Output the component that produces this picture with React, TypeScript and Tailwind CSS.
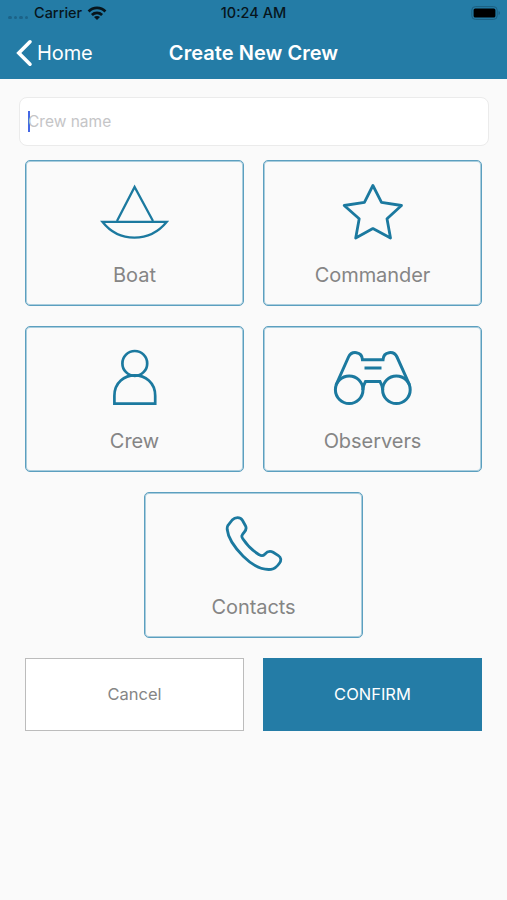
import React, { useState } from 'react'

function BoatIcon() {
  return (
    <svg width="90" height="75" viewBox="0 0 90 75" fill="none" stroke="#1b799f" strokeWidth="2.3">
      <path d="M27 46 L44.6 12 L63 46" />
      <path d="M12.4 46.8 H76.8 C59.6 68 29 68 12.4 46.8 Z" />
    </svg>
  )
}

function StarIcon() {
  return (
    <svg width="90" height="75" viewBox="0 0 90 75" fill="none" stroke="#1b799f" strokeWidth="2.8" strokeLinejoin="round">
      <path d="M44.9 10.5 L53.5 27.3 L73.5 30.5 L59 43.8 L62.5 63 L44.9 53.6 L27.7 63 L31.2 43.8 L16.2 30.5 L36.4 27.3 Z" />
    </svg>
  )
}

function PersonIcon() {
  return (
    <svg width="90" height="75" viewBox="0 0 90 75" fill="none" stroke="#1b799f" strokeWidth="2.7">
      <circle cx="44.8" cy="22.4" r="12.4" />
      <path d="M24.4 62.6 V54.8 C24.4 27.6 65.2 27.6 65.2 54.8 V62.6 Z" />
    </svg>
  )
}

function BinocularsIcon() {
  return (
    <svg width="90" height="75" viewBox="0 0 90 75" fill="none" stroke="#1b799f" strokeWidth="3">
      <circle cx="21.2" cy="48.8" r="13.8" />
      <circle cx="68.4" cy="48.8" r="13.8" />
      <path d="M8 44 L20.5 16 C23.5 9.5 34 10 34.5 18.8 H55 C55.5 10 66 9.5 69 16 L81.6 44" />
      <path d="M36.5 27 H53.5" />
      <path d="M34.8 49 C35 45 36 43 37.5 40.5 H52 C53.5 43 54.5 45 54.8 49" />
    </svg>
  )
}

function PhoneIcon() {
  return (
    <svg width="90" height="75" viewBox="0 0 90 75" fill="none" stroke="#1b799f" strokeWidth="2.8" strokeLinejoin="round">
      <path d="M18.8 18.7 L23.2 13 C26.1 10 31.1 9.8 33.4 13.2 L36.6 19 C37.8 21.6 37 23.3 35.2 25.3 C32.8 28 32 29.2 33.8 31.7 C37.6 37.5 43.6 43.7 50.1 47.7 C52.4 49.2 54.1 49.1 55.8 47.2 C58.6 44 61.2 43.6 64.1 45.3 L69.4 48.6 C72.2 50.4 72.4 53.4 70.6 56 C68.1 59.7 65.6 61.8 62.1 62.4 C53.6 63.3 43.4 58.4 34.2 49.2 C24.6 39.5 19 30.5 18.2 22.5 C18.1 21 18.1 20 18.8 18.7 Z" />
    </svg>
  )
}

function WifiIcon() {
  return (
    <svg className="ml-[5px]" width="20" height="14" viewBox="0 0 20 14" fill="none" stroke="#07151c" strokeWidth="2.8">
      <path d="M1.6 5.4 C6.2 0.7 13.8 0.7 18.4 5.4" />
      <path d="M4.9 8.9 C7.8 6.1 12.2 6.1 15.1 8.9" />
      <path d="M7 11.1 C8.6 9.5 11.4 9.5 13 11.1 L10 14 Z" fill="#07151c" stroke="none" />
    </svg>
  )
}

function Card({ label, children }: { label: string; children: React.ReactNode }) {
  return (
    <button className="flex h-[146px] w-[219px] flex-col items-center rounded-[5px] border border-[#5b9fbf] pt-[14px] shadow-[inset_0_0_0_1px_#a9cddd]">
      {children}
      <span className="mt-[11px] text-[20px] leading-[28px] tracking-[-0.05px] text-[#858585]">{label}</span>
    </button>
  )
}

export default function App() {
  const [name, setName] = useState('')

  return (
    <div className="h-[900px] w-[507px] overflow-hidden bg-[#fafafa] font-['Inter','Liberation_Sans',sans-serif]">
      <header className="h-[79px] bg-[#247ca6]">
        <div className="grid h-[26px] grid-cols-3 items-center text-[14.5px] font-medium text-[#07151c]">
          <div className="flex items-center pl-2">
            <div className="mt-[9px] mr-[6px] flex gap-[2px]">
              {[0, 1, 2, 3].map(i => (
                <span key={i} className="size-[3.5px] rounded-full bg-[#1c6388]" />
              ))}
            </div>
            <span>Carrier</span>
            <WifiIcon />
          </div>
          <span className="text-center">10:24 AM</span>
          <div className="flex justify-end pr-[6px]">
            <svg width="30" height="14" viewBox="0 0 30 14">
              <rect x="0.8" y="0.6" width="25.4" height="12.8" rx="3.6" fill="none" stroke="#1c5f80" strokeWidth="1" />
              <rect x="2.6" y="2.5" width="21.8" height="9" rx="1.6" fill="#000" />
              <path d="M27.6 5 C29.4 5.6 29.4 8.4 27.6 9 Z" fill="#1c5f80" />
            </svg>
          </div>
        </div>
        <div className="grid h-[53px] grid-cols-[150px_1fr_150px] items-center text-white">
          <button className="flex items-center pl-4 text-[20px]">
            <svg width="17" height="28" viewBox="0 0 17 28" fill="none" stroke="currentColor" strokeWidth="3.6" strokeLinecap="round">
              <path d="M14 2.8 L2.8 14 L14 25.2" />
            </svg>
            <span className="ml-[4px] tracking-[-0.1px]">Home</span>
          </button>
          <h1 className="text-center text-[20px] font-semibold tracking-[0.05px] whitespace-nowrap">Create New Crew</h1>
        </div>
      </header>

      <main className="pt-[18px]">
        <div className="ml-[19px] flex h-[49px] w-[470px] items-center rounded-[8px] border border-[#ebebeb] bg-white pl-[8px]">
          <span className="h-[21px] w-[2px] shrink-0 bg-[#4568e5]" />
          <input
            className="-ml-[2px] w-full bg-transparent pt-px text-[15.5px] outline-none placeholder:text-[#c5c5c7]"
            placeholder="Crew name"
            value={name}
            onChange={e => setName(e.target.value)}
          />
        </div>

        <div className="mt-[14px] ml-[25px] flex w-[457px] flex-wrap justify-center gap-x-[19px] gap-y-[20px]">
          <Card label="Boat"><BoatIcon /></Card>
          <Card label="Commander"><StarIcon /></Card>
          <Card label="Crew"><PersonIcon /></Card>
          <Card label="Observers"><BinocularsIcon /></Card>
          <Card label="Contacts"><PhoneIcon /></Card>
        </div>

        <div className="mt-[20px] ml-[25px] flex w-[457px] justify-between text-[16.5px]">
          <button className="h-[73px] w-[219px] border border-[#bcbcbc] bg-white text-[#858585]">Cancel</button>
          <button className="h-[73px] w-[219px] bg-[#247ca6] text-white">CONFIRM</button>
        </div>
      </main>
    </div>
  )
}
